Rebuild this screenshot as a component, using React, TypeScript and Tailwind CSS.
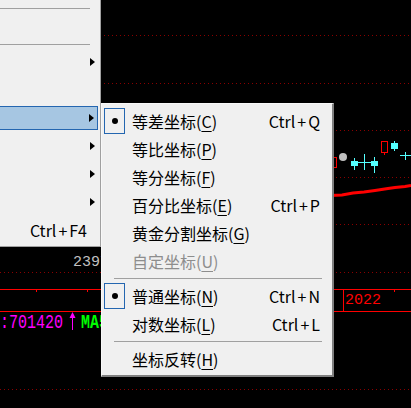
import React from "react"

const menuFont = { fontFamily: '"Noto Sans CJK SC", "Noto Sans", sans-serif' }
const monoFont = { fontFamily: '"Liberation Mono", monospace' }

function Arrow() {
  return <span className="w-0 h-0 border-y-[4.5px] border-y-transparent border-l-[5px] border-l-black" />
}

function Keys({ k }: { k: string }) {
  return (
    <>
      Ctrl<span className="mx-[2px]">+</span>
      {k}
    </>
  )
}

function ParentItem({ arrow, shortcut, active }: { arrow?: boolean; shortcut?: string; active?: boolean }) {
  if (active) {
    return (
      <div className="h-[28px] py-[2px] pr-[2px]">
        <div className="h-full flex items-center justify-end pr-[3px] bg-[#a6c6e2] border-y border-r border-[#2466b0]">
          <Arrow />
        </div>
      </div>
    )
  }
  return (
    <div className="h-[28px] flex items-center justify-end pr-[5px]">
      {shortcut ? (
        <span className="pr-[8px] text-[16px] text-black whitespace-nowrap">
          <Keys k={shortcut} />
        </span>
      ) : null}
      {arrow ? <Arrow /> : null}
    </div>
  )
}

interface SubItemProps {
  label: string
  mnemonic: string
  shortcut?: string
  checked?: boolean
  disabled?: boolean
}

function SubItem({ label, mnemonic, shortcut, checked, disabled }: SubItemProps) {
  return (
    <div className={`h-[28px] flex items-center text-[16px] ${disabled ? "text-[#8d8d8d]" : "text-black"}`}>
      <div className="w-[30px] h-full flex items-center">
        {checked ? (
          <div className="ml-[2px] w-[21px] h-[26px] border border-[#2466b0] flex items-center justify-center">
            <span className="w-[6px] h-[6px] rounded-full bg-black" />
          </div>
        ) : null}
      </div>
      <span className="flex-1 whitespace-nowrap">
        {label}(<span className="underline underline-offset-[3px]">{mnemonic}</span>)
      </span>
      {shortcut ? (
        <span className="pr-[12px] whitespace-nowrap">
          <Keys k={shortcut} />
        </span>
      ) : null}
    </div>
  )
}

function Chart() {
  const dotted = [35.5, 83.5, 130.5, 177.5, 224.5, 272.5, 389.5]
  return (
    <svg className="absolute inset-0" width={411} height={408}>
      {dotted.map((y) => (
        <line key={y} x1={0} x2={411} y1={y} y2={y} stroke="#8a0000" strokeDasharray="1 3" />
      ))}
      <line x1={0} x2={411} y1={289.5} y2={289.5} stroke="#ff0000" />
      <line x1={0} x2={411} y1={311.5} y2={311.5} stroke="#ff0000" />
      <line x1={36.5} x2={36.5} y1={289} y2={292} stroke="#ff0000" />
      <line x1={87.5} x2={87.5} y1={289} y2={292} stroke="#ff0000" />
      <line x1={394.5} x2={394.5} y1={289} y2={292} stroke="#ff0000" />
      <line x1={343.5} x2={343.5} y1={289} y2={312} stroke="#ff0000" />

      {/* MA line */}
      <polyline
        points="330,195.5 342,195 353,193 364,192 375,190.5 388,188.5 395,187.5 405,186.5 411,185.5"
        fill="none"
        stroke="#ff0000"
        strokeWidth={3}
      />

      {/* candles */}
      <rect x={331.5} y={157.5} width={5} height={10} fill="none" stroke="#ff0000" />
      <circle cx={343} cy={157} r={4} fill="#c0c0c0" />
      <line x1={354.5} x2={354.5} y1={158} y2={170} stroke="#54ffff" />
      <rect x={351} y={161} width={7} height={5} fill="#54ffff" />
      <line x1={364.5} x2={364.5} y1={154} y2={170} stroke="#54ffff" />
      <line x1={358} x2={371} y1={162.5} y2={162.5} stroke="#54ffff" />
      <line x1={374.5} x2={374.5} y1={157} y2={173} stroke="#54ffff" />
      <rect x={371} y={161} width={7} height={5} fill="#54ffff" />
      <rect x={381.5} y={141.5} width={6} height={11} fill="none" stroke="#ff0000" />
      <line x1={384.5} x2={384.5} y1={153} y2={155} stroke="#ff0000" />
      <line x1={394.5} x2={394.5} y1={141} y2={151} stroke="#54ffff" />
      <rect x={391} y={143} width={7} height={6} fill="#54ffff" />
      <line x1={405.5} x2={405.5} y1={152} y2={160} stroke="#54ffff" />
      <line x1={400} x2={411} y1={155.5} y2={155.5} stroke="#54ffff" />

      {/* arrow marker */}
      <line x1={72.5} x2={72.5} y1={316} y2={330} stroke="#ff00ff" />
      <polygon points="72.5,312 69.5,318 75.5,318" fill="#ff00ff" />
    </svg>
  )
}

export default function App() {
  return (
    <div className="relative w-[411px] h-[408px] bg-black overflow-hidden" style={menuFont}>
      <Chart />

      <div className="absolute left-[73px] top-[255px] text-[15px] leading-[16px] text-[#c0c0c0]" style={monoFont}>
        2397
      </div>
      <div className="absolute left-[345px] top-[293px] text-[15px] leading-[16px] text-[#ff0000]" style={monoFont}>
        2022
      </div>
      <div className="absolute left-0 top-[314px] flex text-[15px] leading-[16px] origin-top scale-y-[1.3]" style={monoFont}>
        <span className="text-[#ff00ff] w-[66px]">:701420</span>
        <span className="ml-[15px] text-[#00ff00] font-bold">MA5:</span>
      </div>

      {/* parent menu */}
      <div className="absolute left-0 top-0 w-[101px] h-[247px] bg-[#f0f0f0] border-r border-b border-[#a0a0a0]">
        <div className="h-[4px]" />
        <div className="h-[8px] pt-[4px] pr-[10px]">
          <div className="h-px bg-[#a0a0a0]" />
        </div>
        <ParentItem />
        <div className="h-[8px] pt-[4px] pr-[10px]">
          <div className="h-px bg-[#a0a0a0]" />
        </div>
        <ParentItem arrow />
        <ParentItem />
        <ParentItem active />
        <ParentItem arrow />
        <ParentItem arrow />
        <ParentItem arrow />
        <ParentItem shortcut="F4" />
      </div>

      {/* sub menu */}
      <div className="absolute left-[101px] top-[103px] w-[233px] h-[274px] bg-[#f0f0f0] border-t border-l border-t-[#f8f8f8] border-l-[#f8f8f8] border-r-2 border-b-2 border-r-[#808080] border-b-[#808080] pt-[3px]">
        <SubItem label="等差坐标" mnemonic="C" shortcut="Q" checked />
        <SubItem label="等比坐标" mnemonic="P" />
        <SubItem label="等分坐标" mnemonic="F" />
        <SubItem label="百分比坐标" mnemonic="E" shortcut="P" />
        <SubItem label="黄金分割坐标" mnemonic="G" />
        <SubItem label="自定坐标" mnemonic="U" disabled />
        <div className="h-[7px] pt-[3px] pl-[12px] pr-[10px]">
          <div className="h-px bg-[#a0a0a0]" />
        </div>
        <SubItem label="普通坐标" mnemonic="N" shortcut="N" checked />
        <SubItem label="对数坐标" mnemonic="L" shortcut="L" />
        <div className="h-[7px] pt-[3px] pl-[12px] pr-[10px]">
          <div className="h-px bg-[#a0a0a0]" />
        </div>
        <SubItem label="坐标反转" mnemonic="H" />
      </div>
    </div>
  )
}
